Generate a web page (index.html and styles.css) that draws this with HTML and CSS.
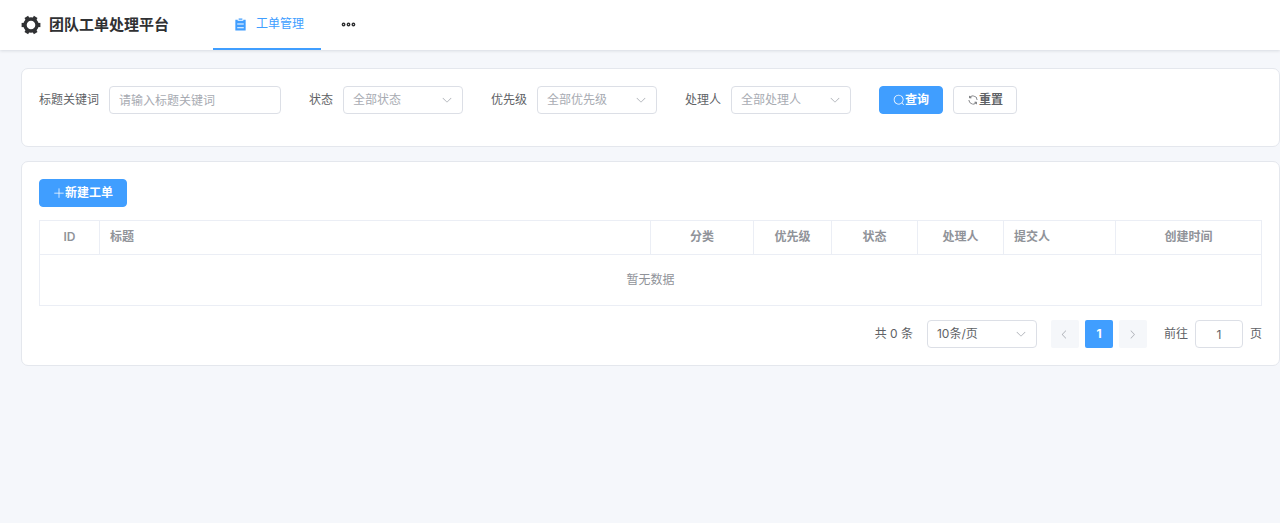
FILE: index.html
```html
<!DOCTYPE html>
<html lang="zh-CN">
<head>
    <meta charset="UTF-8">
    <meta name="viewport" content="width=device-width, initial-scale=1.0">
    <title>团队工单处理平台</title>
    <link rel="stylesheet" href="styles.css">
</head>
<body>
    <!-- shared icons -->
    <svg class="sprite" aria-hidden="true">
        <symbol id="arrow-down" viewBox="0 0 1024 1024">
            <path d="M831.872 340.864 512 652.672 192.128 340.864a30.592 30.592 0 0 0-42.752 0 29.12 29.12 0 0 0 0 41.6L489.664 714.24a32 32 0 0 0 44.672 0l340.288-331.712a29.12 29.12 0 0 0 0-41.728 30.592 30.592 0 0 0-42.752 0z"/>
        </symbol>
    </svg>

    <header class="header">
        <h1 class="logo">
            <svg class="logo-icon" viewBox="0 0 20 20" aria-hidden="true">
                <circle cx="10" cy="10" r="6" fill="none" stroke="currentColor" stroke-width="3.4"/>
                <g fill="currentColor">
                    <path id="tooth" d="M0.6 7.9h3v4.2h-3z"/>
                    <use href="#tooth" transform="rotate(60 10 10)"/>
                    <use href="#tooth" transform="rotate(120 10 10)"/>
                    <use href="#tooth" transform="rotate(180 10 10)"/>
                    <use href="#tooth" transform="rotate(240 10 10)"/>
                    <use href="#tooth" transform="rotate(300 10 10)"/>
                </g>
            </svg>
            团队工单处理平台
        </h1>
        <nav class="nav">
            <a class="nav-item active" href="#">
                <svg class="nav-icon" viewBox="0 0 1024 1024" aria-hidden="true">
                    <path fill="currentColor" d="M704 192h160v736H160V192h160v64h384zM288 512h448v-64H288zm0 256h448v-64H288zm96-576V96h256v96z"/>
                </svg>
                工单管理
            </a>
            <button class="nav-more" type="button" aria-label="更多">
                <svg viewBox="0 0 1024 1024" fill="none" stroke="currentColor" stroke-width="96" aria-hidden="true">
                    <circle cx="176" cy="512" r="84"/>
                    <circle cx="512" cy="512" r="84"/>
                    <circle cx="848" cy="512" r="84"/>
                </svg>
            </button>
        </nav>
    </header>

    <main class="main">
        <section class="card">
            <form class="search-form">
                <div class="form-item">
                    <label for="keyword">标题关键词</label>
                    <input class="control keyword" type="text" id="keyword" placeholder="请输入标题关键词">
                </div>
                <div class="form-item">
                    <label for="status">状态</label>
                    <div class="select-wrap">
                        <select class="control" id="status">
                            <option>全部状态</option>
                        </select>
                        <svg class="arrow"><use href="#arrow-down"/></svg>
                    </div>
                </div>
                <div class="form-item">
                    <label for="priority">优先级</label>
                    <div class="select-wrap">
                        <select class="control" id="priority">
                            <option>全部优先级</option>
                        </select>
                        <svg class="arrow"><use href="#arrow-down"/></svg>
                    </div>
                </div>
                <div class="form-item">
                    <label for="handler">处理人</label>
                    <div class="select-wrap">
                        <select class="control" id="handler">
                            <option>全部处理人</option>
                        </select>
                        <svg class="arrow"><use href="#arrow-down"/></svg>
                    </div>
                </div>
                <div class="form-item">
                    <button class="btn btn-primary" type="button">
                        <svg viewBox="0 0 1024 1024" aria-hidden="true"><path d="m795.904 750.72 124.992 124.928a32 32 0 0 1-45.248 45.248L750.656 795.904a416 416 0 1 1 45.248-45.248zM480 832a352 352 0 1 0 0-704 352 352 0 0 0 0 704z"/></svg>查询
                    </button>
                    <button class="btn" type="button">
                        <svg viewBox="0 0 1024 1024" aria-hidden="true"><path d="M771.776 794.88A384 384 0 0 1 128 512h64a320 320 0 0 0 555.712 216.448H654.72a32 32 0 1 1 0-64h149.056a32 32 0 0 1 32 32v148.928a32 32 0 1 1-64 0v-50.56zM276.288 295.616h92.992a32 32 0 0 1 0 64H220.16a32 32 0 0 1-32-32V178.56a32 32 0 0 1 64 0v50.56A384 384 0 0 1 896.128 512h-64a320 320 0 0 0-555.776-216.384z"/></svg>重置
                    </button>
                </div>
            </form>
        </section>

        <section class="card">
            <button class="btn btn-primary" type="button">
                <svg viewBox="0 0 1024 1024" aria-hidden="true"><path d="M480 480V128a32 32 0 0 1 64 0v352h352a32 32 0 1 1 0 64H544v352a32 32 0 1 1-64 0V544H128a32 32 0 0 1 0-64z"/></svg>新建工单
            </button>

            <table class="table">
                <colgroup>
                    <col class="col-id">
                    <col>
                    <col class="col-category">
                    <col class="col-priority">
                    <col class="col-person">
                    <col class="col-person">
                    <col class="col-submitter">
                    <col class="col-time">
                </colgroup>
                <thead>
                    <tr>
                        <th>ID</th>
                        <th class="left">标题</th>
                        <th>分类</th>
                        <th>优先级</th>
                        <th>状态</th>
                        <th>处理人</th>
                        <th class="left">提交人</th>
                        <th>创建时间</th>
                    </tr>
                </thead>
                <tbody>
                    <tr>
                        <td class="empty" colspan="8">暂无数据</td>
                    </tr>
                </tbody>
            </table>

            <div class="pagination">
                <span class="total">共 0 条</span>
                <div class="select-wrap page-size">
                    <select class="control" aria-label="每页条数">
                        <option>10条/页</option>
                    </select>
                    <svg class="arrow"><use href="#arrow-down"/></svg>
                </div>
                <div class="pager">
                    <button class="page-btn" type="button" disabled aria-label="上一页">
                        <svg viewBox="0 0 1024 1024"><path d="M609.408 149.376 277.76 489.6a32 32 0 0 0 0 44.672l331.648 340.352a29.12 29.12 0 0 0 41.728 0 30.592 30.592 0 0 0 0-42.752L339.264 511.936l311.872-319.872a30.592 30.592 0 0 0 0-42.688 29.12 29.12 0 0 0-41.728 0z"/></svg>
                    </button>
                    <button class="page-btn active" type="button">1</button>
                    <button class="page-btn" type="button" disabled aria-label="下一页">
                        <svg viewBox="0 0 1024 1024"><path d="M340.864 149.312a30.592 30.592 0 0 0 0 42.752L652.736 512 340.864 831.872a30.592 30.592 0 0 0 0 42.752 29.12 29.12 0 0 0 41.728 0L714.24 534.336a32 32 0 0 0 0-44.672L382.592 149.376a29.12 29.12 0 0 0-41.728 0z"/></svg>
                    </button>
                </div>
                <label class="jump">
                    前往
                    <input class="control" type="number" value="1" min="1">
                    页
                </label>
            </div>
        </section>
    </main>
</body>
</html>
```
FILE: styles.css
```css
:root {
    --primary: #409eff;
    --text: #606266;
    --text-light: #909399;
    --placeholder: #a8abb2;
    --border: #dcdfe6;
    --border-light: #ebeef5;
    --bg: #f5f7fa;
}

* {
    box-sizing: border-box;
}

body {
    margin: 0;
    background: #f5f7fb;
    color: var(--text);
    font-family: Inter, "Noto Sans CJK SC", sans-serif;
    font-size: 12px;
    line-height: 20px;
}

button,
input,
select {
    font: inherit;
    color: inherit;
}

svg {
    display: block;
    flex-shrink: 0;
}

.sprite {
    display: none;
}

/* Header */
.header {
    display: flex;
    height: 50px;
    padding-left: 21px;
    background: #fff;
    box-shadow: 0 1px 3px rgba(0, 21, 41, 0.12);
}

.logo {
    display: flex;
    align-items: center;
    gap: 8px;
    margin: 0 44px 0 0;
    color: #303133;
    font-size: 15px;
    font-weight: 600;
}

.logo-icon {
    width: 20px;
    height: 20px;
}

.nav {
    display: flex;
}

.nav-item {
    display: flex;
    align-items: center;
    gap: 8px;
    padding: 0 17px 0 20px;
    border-bottom: 2px solid transparent;
    text-decoration: none;
}

.nav-item.active {
    border-bottom-color: var(--primary);
    color: var(--primary);
}

.nav-icon {
    width: 15px;
    height: 15px;
}

.nav-more {
    padding: 0 20px 2px;
    border: none;
    background: none;
    color: #303133;
    cursor: pointer;
}

.nav-more svg {
    width: 15px;
    height: 15px;
}

/* Cards */
.main {
    display: flex;
    flex-direction: column;
    gap: 14px;
    padding: 18px 0 18px 21px;
}

.card {
    padding: 17px;
    border: 1px solid #e4e7ed;
    border-radius: 7px;
    background: #fff;
}

/* Search form */
.search-form {
    display: flex;
    flex-wrap: wrap;
    column-gap: 28px;
}

.form-item {
    display: flex;
    align-items: center;
    gap: 10px;
    margin-bottom: 15px;
}

.control {
    width: 100%;
    height: 28px;
    padding: 0 9px;
    border: 1px solid var(--border);
    border-radius: 4px;
    background: #fff;
    outline: none;
    appearance: none;
}

.control:focus {
    border-color: var(--primary);
}

.control::placeholder {
    color: var(--placeholder);
}

.keyword {
    width: 172px;
}

.select-wrap {
    position: relative;
    width: 120px;
}

.search-form select {
    color: var(--placeholder);
}

.arrow {
    position: absolute;
    top: 8px;
    right: 10px;
    width: 12px;
    height: 12px;
    fill: var(--placeholder);
    pointer-events: none;
}

.btn {
    display: inline-flex;
    align-items: center;
    height: 28px;
    padding: 0 13px;
    border: 1px solid var(--border);
    border-radius: 4px;
    background: #fff;
    font-weight: 600;
    cursor: pointer;
}

.btn svg {
    width: 12px;
    height: 12px;
    fill: currentColor;
}

.btn-primary {
    border-color: var(--primary);
    background: var(--primary);
    color: #fff;
}

/* Table */
.table {
    width: 100%;
    margin: 13px 0 14px;
    border-collapse: collapse;
    table-layout: fixed;
    color: var(--text-light);
}

.table th,
.table td {
    border: 1px solid var(--border-light);
    text-align: center;
}

.table th {
    padding: 6px 10px 7px;
    font-weight: 600;
}

.table .left {
    text-align: left;
}

.table .empty {
    height: 51px;
    padding: 0;
}

.col-id {
    width: 60px;
}

.col-category {
    width: 103px;
}

.col-priority {
    width: 78px;
}

.col-person {
    width: 86px;
}

.col-submitter {
    width: 112px;
}

.col-time {
    width: 146px;
}

/* Pagination */
.pagination {
    display: flex;
    justify-content: flex-end;
    align-items: center;
}

.page-size {
    width: 110px;
    margin: 0 14px;
}

.pager {
    display: flex;
    gap: 6px;
}

.page-btn {
    display: flex;
    justify-content: center;
    align-items: center;
    width: 28px;
    height: 28px;
    padding: 0;
    border: none;
    border-radius: 2px;
    background: var(--bg);
}

.page-btn svg {
    width: 11px;
    height: 11px;
    fill: var(--placeholder);
}

.page-btn.active {
    background: var(--primary);
    color: #fff;
    font-weight: 700;
}

.jump {
    display: flex;
    align-items: center;
    gap: 7px;
    margin-left: 17px;
}

.jump .control {
    width: 48px;
    text-align: center;
    appearance: textfield;
}

.jump .control::-webkit-inner-spin-button {
    margin: 0;
    appearance: none;
}
```
